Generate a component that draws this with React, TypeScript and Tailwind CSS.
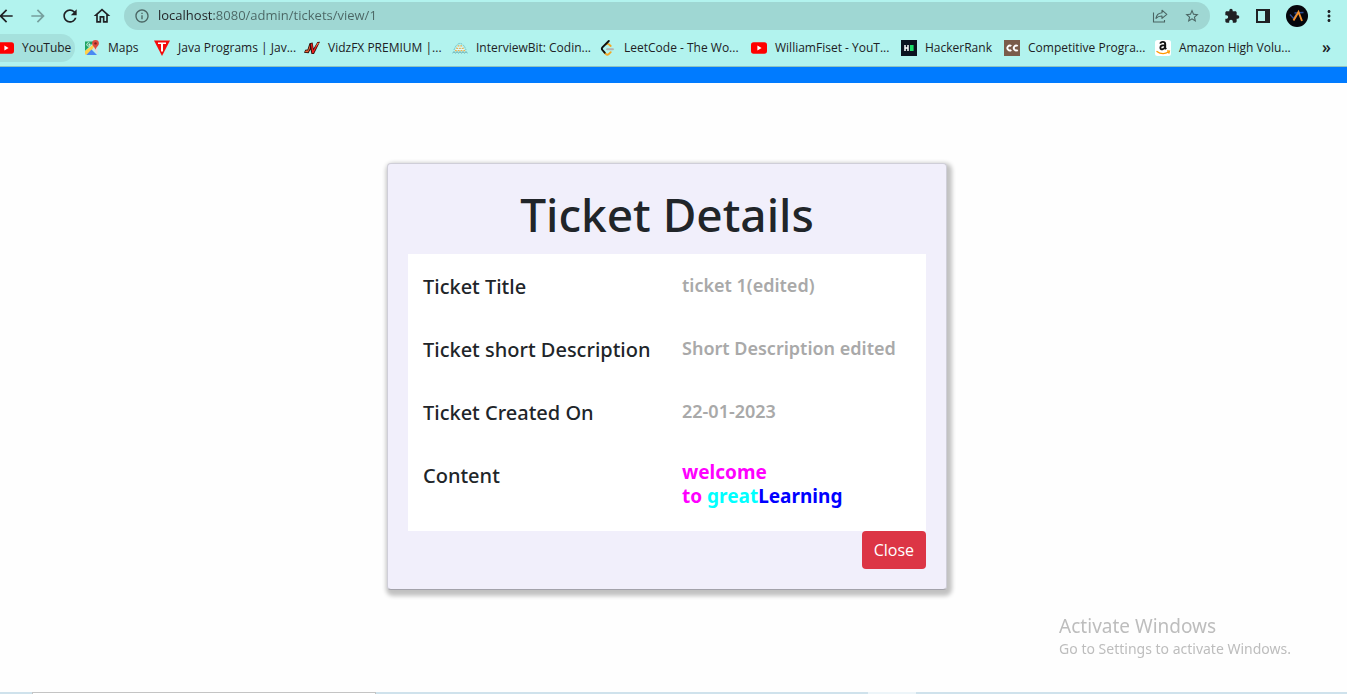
import type { ReactNode } from "react";
import {
  MdArrowBack,
  MdArrowForward,
  MdExtension,
  MdInfoOutline,
  MdMoreVert,
  MdOutlineHome,
  MdRefresh,
  MdStarBorder,
} from "react-icons/md";

function YouTubeIcon() {
  return (
    <svg viewBox="0 0 16 16" className="size-4 shrink-0" aria-hidden="true">
      <rect x="0" y="2.3" width="16" height="11.4" rx="2.6" fill="#ff0000" />
      <path d="M6.4 5.6 10.6 8l-4.2 2.4z" fill="#fff" />
    </svg>
  );
}

function MapsIcon() {
  return (
    <svg viewBox="0 0 16 16" className="size-4 shrink-0" aria-hidden="true">
      <path d="M1 1.500h9.500L1 11z" fill="#1fa463" />
      <path d="M10.500 3.500 12.500 5 3 14.800 1 14.500V11z" fill="#ffd04b" />
      <path d="M7.500 9.500 13 15H2.300z" fill="#4a89f3" />
      <path d="M8.800 8.200 11 6l2.500 2.500V14.300z" fill="#d9dde0" />
      <path d="M6.300 4.500H4.500M5.700 3.300A1.700 1.700 0 1 0 6.200 4.600" stroke="#fff" strokeWidth=".8" fill="none" />
      <path d="M11.500 0a3.400 3.400 0 0 0-3.400 3.400c0 2.300 2.700 3.300 3.400 6.400.7-3.100 3.400-4.100 3.400-6.400A3.400 3.400 0 0 0 11.500 0z" fill="#dd4b3e" />
      <circle cx="11.500" cy="3.400" r="1.200" fill="#7b231e" />
    </svg>
  );
}

function JavaIcon() {
  return (
    <svg viewBox="0 0 16 16" className="size-4 shrink-0" aria-hidden="true">
      <path d="M0 .5h16L8 16z" fill="#f50a0a" />
      <path d="M4 2.500h8v1.600H9v7.500H7V4.100H4z" fill="#fff" />
    </svg>
  );
}

function VidzIcon() {
  return (
    <svg viewBox="0 0 16 16" className="size-4 shrink-0" aria-hidden="true">
      <path d="M0 12.800 1.300 9.800 3.500 9.500 5.500 3.200 8.600 2.600l1 6L13.400 2l2.600-.2L10 14H7.500L6.500 9.500 4.500 13.300z" fill="#2a0d08" />
      <path d="M.8 12 2 10.500l2 .1L6.200 4.200 5.900 8.500 4 12.300z" fill="#f2683a" />
      <path d="M6.800 3.700 8.200 3.500 9.200 10.500 13.700 2.700l1.300-.1L9.400 13.200H8.200z" fill="#ee2020" />
      <path d="m11.100 7.500 2.500-4.600h1.300z" fill="#ff9a58" />
    </svg>
  );
}

function InterviewBitIcon() {
  return (
    <svg viewBox="0 0 16 16" className="size-4 shrink-0" aria-hidden="true">
      <path d="M2 10Q4 4 8 3.300q4 .7 6 6.700" fill="none" stroke="#6fb9be" strokeDasharray="1.500 1" />
      <path d="M5.600 6h4.800M4.300 8.300h7.800M3 10.600h10.500" stroke="#f3ad4e" strokeWidth="1.500" strokeDasharray="1.700 1.100" />
      <path d="M5 7.200h6M3.500 9.500h9" stroke="#f3fbfa" strokeWidth=".8" />
      <path d="M.5 13 2 11.700l1.500 1.300L5 11.700l1.500 1.300L8 11.700l1.500 1.300L11 11.700l1.500 1.300L14 11.700l1.500 1.300" stroke="#5fa3aa" fill="none" />
    </svg>
  );
}

function LeetCodeIcon() {
  return (
    <svg viewBox="0 0 16 16" className="size-4 shrink-0" aria-hidden="true" fill="none" strokeLinecap="round" strokeWidth="1.900">
      <path d="m4.500 12.500 1.300 1.600q1.500 1.200 3 0l1.900-1.900M6.300 4.300q1.300-.9 2.500 0l1.900 1.600" stroke="#f5a623" />
      <path d="M8.800 1 2.400 7.400Q1.300 8.700 2.400 10l2.300 2.700" stroke="#101010" />
      <path d="M7 9.300h6" stroke="#b3b3b3" />
    </svg>
  );
}

function HackerRankIcon() {
  return (
    <svg viewBox="0 0 16 16" className="size-4 shrink-0" aria-hidden="true">
      <path d="M0 0h16v16H0z" fill="#0b1320" />
      <path d="M4 5v6M7 5v6M4 8h3" stroke="#fff" strokeWidth="1.500" />
      <path d="M9 5h3.600v6H9z" fill="#1be06a" />
    </svg>
  );
}

function CodeChefIcon() {
  return (
    <svg viewBox="0 0 16 16" className="size-4 shrink-0" aria-hidden="true">
      <path d="M0 0h16v16H0z" fill="#7a5c4a" />
      <path d="M7.300 6.100A2.400 2.400 0 1 0 7.300 9.900M13.700 6.100A2.400 2.400 0 1 0 13.700 9.900" stroke="#fff" strokeWidth="1.900" fill="none" />
    </svg>
  );
}

function AmazonIcon() {
  return (
    <svg viewBox="0 0 16 16" className="size-4 shrink-0" aria-hidden="true">
      <rect width="16" height="16" rx="2.500" fill="#fff" />
      <path d="M5.300 3.700Q5.600 1.900 7.900 1.900T10.200 4V8L11.200 9.200M10 5.100Q5.400 5 5.400 7.400T7.500 9.200Q9.400 9 10 6.900" stroke="#111" strokeWidth="1.900" fill="none" />
      <path d="M1.500 11.200Q7.500 15.500 13.500 12M12 10.900l2.400.2-.6 2.500" stroke="#ff9900" strokeWidth="1.300" fill="none" />
    </svg>
  );
}

function ShareIcon() {
  return (
    <svg viewBox="0 0 16 16" className="size-4" aria-hidden="true" fill="none" stroke="currentColor" strokeWidth="1.100">
      <path d="M1.500 4.500v9.500h11V12" />
      <path d="M10 2.200 14.800 6.300 10 10.400V8q-3.800-.1-6 2.400Q4.600 5.300 10 4.700z" strokeLinejoin="round" />
    </svg>
  );
}

function SidePanelIcon() {
  return (
    <svg viewBox="0 0 14 14" className="size-3.5" aria-hidden="true">
      <path d="M1 1h12v12H1z" fill="none" stroke="currentColor" strokeWidth="2" />
      <path d="M9 1h4v12H9z" fill="currentColor" />
    </svg>
  );
}

function AvatarIcon() {
  return (
    <svg viewBox="0 0 22 22" className="size-[22px]" aria-hidden="true" fill="none">
      <circle cx="11" cy="11" r="11" fill="#05060c" />
      <path d="M4 9.500 7.500 13.500 10.500 9M8.500 8l9-.5" stroke="#2c4d94" strokeWidth="1.300" />
      <path d="M7.500 15.500 12.500 7l3.500 9" stroke="#f2902c" strokeWidth="1.900" />
    </svg>
  );
}

type Bookmark = { label: string; icon: ReactNode; width: string; active?: boolean };

const bookmarks: Bookmark[] = [
  { label: "YouTube", icon: <YouTubeIcon />, width: "w-[86px]", active: true },
  { label: "Maps", icon: <MapsIcon />, width: "w-[70px]" },
  { label: "Java Programs | Jav...", icon: <JavaIcon />, width: "w-[150px]" },
  { label: "VidzFX PREMIUM |...", icon: <VidzIcon />, width: "w-[148px]" },
  { label: "InterviewBit: Codin...", icon: <InterviewBitIcon />, width: "w-[148px]" },
  { label: "LeetCode - The Wo...", icon: <LeetCodeIcon />, width: "w-[151px]" },
  { label: "WilliamFiset - YouT...", icon: <YouTubeIcon />, width: "w-[150px]" },
  { label: "HackerRank", icon: <HackerRankIcon />, width: "w-[103px]" },
  { label: "Competitive Progra...", icon: <CodeChefIcon />, width: "w-[151px]" },
  { label: "Amazon High Volu...", icon: <AmazonIcon />, width: "w-[150px]" },
];

function BrowserBar() {
  return (
    <header className="overflow-hidden border-b border-[#8fc3bf] bg-[#b2f3ee] font-['Open_Sans','Noto_Sans',sans-serif] text-[#202124]">
      <div className="flex h-8 items-center">
        <nav aria-label="History" className="-ml-1 flex items-center gap-3">
          <button aria-label="Back"><MdArrowBack className="size-5" /></button>
          <button aria-label="Forward" className="text-[#769f9d]"><MdArrowForward className="size-5" /></button>
          <button aria-label="Reload"><MdRefresh className="size-5" /></button>
          <button aria-label="Home"><MdOutlineHome className="size-5" /></button>
        </nav>
        <div className="ml-3 flex h-7 flex-1 items-center rounded-full bg-[#9fd7d3] px-2.5 text-[#4a6563]">
          <MdInfoOutline className="size-4" />
          <input
            aria-label="Address"
            defaultValue="localhost:8080/admin/tickets/view/1"
            className="ml-2 min-w-0 flex-1 bg-[linear-gradient(to_right,#202124_56px,#4a6563_56px)] bg-clip-text text-[13px] text-transparent outline-none"
          />
          <button aria-label="Share" className="mr-4"><ShareIcon /></button>
          <button aria-label="Bookmark this page"><MdStarBorder className="size-4" /></button>
        </div>
        <div className="flex items-center pr-[9px] pl-3.5">
          <button aria-label="Extensions"><MdExtension className="size-4" /></button>
          <button aria-label="Side panel" className="ml-4"><SidePanelIcon /></button>
          <button aria-label="Profile" className="ml-4"><AvatarIcon /></button>
          <button aria-label="Menu" className="ml-3"><MdMoreVert className="size-[18px]" /></button>
        </div>
      </div>
      <nav aria-label="Bookmarks" className="-ml-0.5 flex h-[34px] items-start pt-0.5 text-xs">
        {bookmarks.map((bookmark) => (
          <div key={bookmark.label} className={`${bookmark.width} shrink-0`}>
            <a
              href="#"
              className={`inline-flex h-7 items-center gap-2 whitespace-nowrap ${
                bookmark.active ? "rounded-r-full bg-[#a5e1dd] pr-1" : ""
              }`}
            >
              {bookmark.icon}
              <span>{bookmark.label}</span>
            </a>
          </div>
        ))}
        <button aria-label="More bookmarks" className="mr-4 ml-auto h-[26px] text-base leading-none font-semibold">»</button>
      </nav>
    </header>
  );
}

type Row = { label: string; value: ReactNode; valueClass: string };

const rows: Row[] = [
  { label: "Ticket Title", value: "ticket 1(edited)", valueClass: "pt-[19px] text-lg font-semibold text-[#a9a9a9]" },
  { label: "Ticket short Description", value: "Short Description edited", valueClass: "pt-[19px] text-lg font-semibold text-[#a9a9a9]" },
  { label: "Ticket Created On", value: "22-01-2023", valueClass: "pt-[19px] text-lg font-semibold text-[#a9a9a9]" },
  {
    label: "Content",
    value: (
      <>
        welcome
        <br />
        to <span className="text-[#00ffff]">great</span>
        <span className="text-[#0000ff]">Learning</span>
      </>
    ),
    valueClass: "pt-[17px] pb-[5px] text-[19px] font-bold text-[#ff00ff]",
  },
];

function TicketCard() {
  return (
    <section className="w-[560px] max-w-full rounded-[4px] border border-[#cfced8] border-b-[#a3a2aa] bg-[#f1effb] p-5 shadow-[2px_3px_4px_3px_rgba(0,0,0,0.24)]">
      <h1 className="mb-2.5 text-center text-[46px] leading-[60px] font-medium">Ticket Details</h1>
      <dl className="bg-white">
        {rows.map((row) => (
          <div key={row.label} className="grid grid-cols-2 pb-[18px]">
            <dt className="pt-[21px] pl-[15px] text-xl leading-6 font-medium whitespace-nowrap">{row.label}</dt>
            <dd className={`pl-[15px] leading-6 whitespace-nowrap ${row.valueClass}`}>{row.value}</dd>
          </div>
        ))}
      </dl>
      <div className="flex justify-end">
        <button className="h-[38px] rounded-[4px] bg-[#dc3545] px-3 font-['Open_Sans','Noto_Sans',sans-serif] text-base text-white">Close</button>
      </div>
    </section>
  );
}

export default function App() {
  return (
    <div className="flex min-h-screen flex-col bg-[#fefefe] font-['Noto_Sans','Open_Sans',sans-serif] text-[#212529]">
      <BrowserBar />
      <div className="h-4 bg-[#007bff]" />
      <main className="flex flex-1 items-start justify-center pt-20 pr-[13px]">
        <TicketCard />
      </main>
      <aside className="fixed right-14 bottom-[34px] text-[#bdbdbd]">
        <p className="text-[19px] leading-6">Activate Windows</p>
        <p className="text-sm leading-[22px]">Go to Settings to activate Windows.</p>
      </aside>
      <footer className="flex h-0.5 bg-[#cfe2ec]">
        <div className="ml-8 h-0.5 w-[344px] border border-b-0 border-[#c4c4c4] bg-white" />
        <div className="ml-[492px] h-0.5 w-12 bg-[#edf5f9]" />
      </footer>
    </div>
  );
}
